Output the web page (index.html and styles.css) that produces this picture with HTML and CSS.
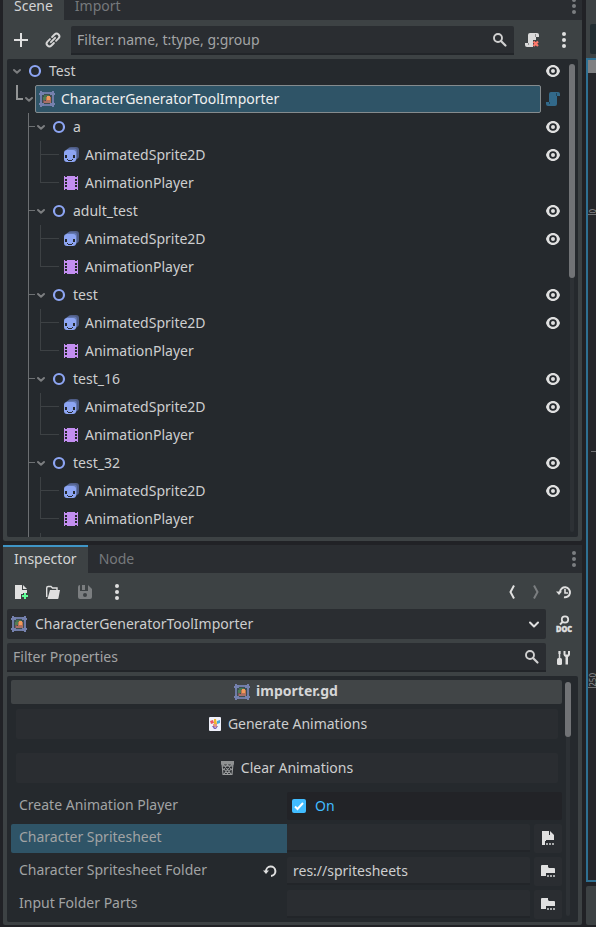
FILE: index.html
```
<!DOCTYPE html>
<html lang="en">
<head>
<meta charset="utf-8">
<title>Scene and Inspector docks</title>
<link rel="stylesheet" href="styles.css">
</head>
<body>
<svg class="defs" aria-hidden="true">
  <symbol id="eye" viewBox="0 0 16 16"><path d="M8 2C4.500 2 1.800 4.600 1 8c.8 3.400 3.500 6 7 6s6.200-2.600 7-6c-.8-3.400-3.500-6-7-6zm0 2.200a3.800 3.800 0 1 1 0 7.600 3.800 3.800 0 0 1 0-7.600zM8 6a2 2 0 1 0 0 4 2 2 0 0 0 0-4z" fill="#e0e0e0" fill-rule="evenodd"/></symbol>
  <symbol id="node2d" viewBox="0 0 16 16"><circle cx="8" cy="8" r="5" fill="none" stroke="#8da5f3" stroke-width="2.200"/></symbol>
  <symbol id="sprite" viewBox="0 0 16 16"><rect x="5" y="0" width="11" height="12" rx="3" fill="#4f5d87"/><rect x="3" y="1.500" width="11" height="12" rx="3" fill="#6478b0"/><rect x="1" y="3" width="12" height="12" rx="3" fill="#8da5f3"/><path d="M2 8h2v3H2zM10 8h2v3h-2zM4 12h1v1h4v-1h1v1H9v1H5v-1H4z" fill="#25292d"/></symbol>
  <symbol id="film" viewBox="0 0 16 16"><path d="M1 1v14h14V1z" fill="#c38ef1"/><path d="M2 1h2v1H2zM2 4h2v2H2zM2 7h2v2H2zM2 10h2v2H2zM2 14h2v1H2zM12 1h2v1h-2zM12 4h2v2h-2zM12 7h2v2h-2zM12 10h2v2h-2zM12 14h2v1h-2z" fill="#25292d"/></symbol>
  <symbol id="chev" viewBox="0 0 10 10"><path d="M2 4l3 2.700L8 4" fill="none" stroke="#7c7e80" stroke-width="2" stroke-linecap="round" stroke-linejoin="round"/></symbol>
  <symbol id="frame" viewBox="0 0 16 16"><path d="M2 2h12v12H2z" fill="#3c4e52" stroke="#6f7ba6" stroke-width="2"/><path d="M1 0h2v1h2v3H3v1H1V4H0V2h1zM13 0h2v2h1v2h-1v1h-2V4h-2V1h2zM1 11h2v1h2v3H3v1H1v-2H0v-2h1zM13 11h2v1h1v2h-1v2h-2v-1h-2v-3h2z" fill="#7581ae"/><path d="M5 4h5v3H5z" fill="#4a7450"/><path d="M4 9h2v3H4z" fill="#7b5558"/><path d="M7 6h5v4H7z" fill="#b97054"/><path d="M8 5h3v4H8z" fill="#f09a5a"/><path d="M5 10h7v2H5z" fill="#a86f68"/><path d="M4 6h3v3H4z" fill="#527d55"/></symbol>
  <symbol id="search" viewBox="0 0 16 16"><circle cx="6" cy="6" r="4" fill="none" stroke="#d0d0d0" stroke-width="1.900"/><path d="M9 9l4.500 4.500" stroke="#d0d0d0" stroke-width="2.200" stroke-linecap="round"/></symbol>
  <symbol id="script" viewBox="0 0 16 16"><path d="M6 1a2 2 0 0 0-2 2v8H1v2a2 2 0 0 0 2 2h7a2 2 0 0 0 2-2V5h3V3a2 2 0 0 0-2-2z" fill="currentColor"/><path d="M11.500 2v3M4.500 11v2" stroke="#0005"/></symbol>
  <symbol id="dots" viewBox="0 0 16 16"><circle cx="8" cy="2" r="2"/><circle cx="8" cy="8" r="2"/><circle cx="8" cy="14" r="2"/></symbol>
  <symbol id="folder" viewBox="0 0 16 16"><path d="M1 3a1 1 0 0 1 1-1h6v2l1 1h5a1 1 0 0 1 1 1v4H6v3H1z" fill="#e0e0e0"/><path d="M7 12h2v2H7zM10 12h2v2h-2zM13 12h2v2h-2z" fill="#a8aaab"/></symbol>
</svg>

<main class="editor">
  <div class="docks">
    <section class="dock scene">
      <div class="tabs">
        <span class="tab active">Scene</span><span class="tab">Import</span>
        <svg class="icon tabmenu dim"><use href="#dots"/></svg>
      </div>
      <div class="toolbar">
        <svg class="icon" viewBox="0 0 16 16"><path d="M8 1v14M1 8h14" stroke="#e0e0e0" stroke-width="2"/></svg>
        <svg class="icon link" viewBox="0 0 16 16"><g transform="rotate(-45 8 8)" fill="none" stroke="#d6d6d6" stroke-width="1.900"><path d="M6.500 5.200H3a2.800 2.800 0 0 0 0 5.600h3.500M9.500 5.200H13a2.800 2.800 0 0 1 0 5.600H9.500M5 8h6" stroke-linecap="round"/></g></svg>
        <div class="field grow"><span>Filter: name, t:type, g:group</span><svg class="icon"><use href="#search"/></svg></div>
        <svg class="icon detach" viewBox="0 0 16 16"><use href="#script"/><path d="M9 8h7v8H9z" fill="#3d4244"/><path d="M9.500 9.500l4.500 4.500M14 9.500L9.500 14" stroke="#ff786b" stroke-width="2.200"/></svg>
        <svg class="icon bright"><use href="#dots"/></svg>
      </div>
      <div class="tree">
        <div class="rows">
          <div class="row root"><svg class="chev"><use href="#chev"/></svg><svg class="icon"><use href="#node2d"/></svg><span>Test</span><svg class="icon eye"><use href="#eye"/></svg></div>
          <div class="row chosen"><svg class="elbow" viewBox="0 0 28 28"><path d="M10 0v14h6" fill="none" stroke="#929495" stroke-width="2"/><use href="#chev" x="17" y="9" width="10" height="10"/></svg><div class="selection"><svg class="icon"><use href="#frame"/></svg><span>CharacterGeneratorToolImporter</span></div><svg class="icon eye blue"><use href="#script"/></svg></div>
          <div class="branch">
            <div class="row group"><svg class="chev"><use href="#chev"/></svg><svg class="icon"><use href="#node2d"/></svg><span>a</span><svg class="icon eye"><use href="#eye"/></svg></div>
            <div class="row leaf"><svg class="icon"><use href="#sprite"/></svg><span>AnimatedSprite2D</span><svg class="icon eye"><use href="#eye"/></svg></div>
            <div class="row leaf last"><svg class="icon"><use href="#film"/></svg><span>AnimationPlayer</span></div>
            <div class="row group"><svg class="chev"><use href="#chev"/></svg><svg class="icon"><use href="#node2d"/></svg><span>adult_test</span><svg class="icon eye"><use href="#eye"/></svg></div>
            <div class="row leaf"><svg class="icon"><use href="#sprite"/></svg><span>AnimatedSprite2D</span><svg class="icon eye"><use href="#eye"/></svg></div>
            <div class="row leaf last"><svg class="icon"><use href="#film"/></svg><span>AnimationPlayer</span></div>
            <div class="row group"><svg class="chev"><use href="#chev"/></svg><svg class="icon"><use href="#node2d"/></svg><span>test</span><svg class="icon eye"><use href="#eye"/></svg></div>
            <div class="row leaf"><svg class="icon"><use href="#sprite"/></svg><span>AnimatedSprite2D</span><svg class="icon eye"><use href="#eye"/></svg></div>
            <div class="row leaf last"><svg class="icon"><use href="#film"/></svg><span>AnimationPlayer</span></div>
            <div class="row group"><svg class="chev"><use href="#chev"/></svg><svg class="icon"><use href="#node2d"/></svg><span>test_16</span><svg class="icon eye"><use href="#eye"/></svg></div>
            <div class="row leaf"><svg class="icon"><use href="#sprite"/></svg><span>AnimatedSprite2D</span><svg class="icon eye"><use href="#eye"/></svg></div>
            <div class="row leaf last"><svg class="icon"><use href="#film"/></svg><span>AnimationPlayer</span></div>
            <div class="row group"><svg class="chev"><use href="#chev"/></svg><svg class="icon"><use href="#node2d"/></svg><span>test_32</span><svg class="icon eye"><use href="#eye"/></svg></div>
            <div class="row leaf"><svg class="icon"><use href="#sprite"/></svg><span>AnimatedSprite2D</span><svg class="icon eye"><use href="#eye"/></svg></div>
            <div class="row leaf last"><svg class="icon"><use href="#film"/></svg><span>AnimationPlayer</span></div>
            <div class="stub"></div>
          </div>
        </div>
        <div class="scroll"><div class="thumb"></div></div>
      </div>
    </section>

    <section class="dock inspector">
      <div class="tabs">
        <span class="tab active">Inspector</span><span class="tab">Node</span>
        <svg class="icon tabmenu dim"><use href="#dots"/></svg>
      </div>
      <div class="toolbar">
        <svg class="icon" viewBox="0 0 16 16"><path d="M2 1h7v5h5v3h-4v1H8v5H2z" fill="#e0e0e0"/><path d="M10 1l4 4h-4z" fill="#e0e0e0"/><path d="M12 9v6M9 12h6" stroke="#5fff97" stroke-width="2"/></svg>
        <svg class="icon open" viewBox="0 0 16 16"><path d="M1.700 13V4a1.500 1.500 0 0 1 1.500-1.500H6L7.500 4H12v2" fill="none" stroke="#e0e0e0" stroke-width="1.400"/><path d="M5 6h10l-1.500 8a1 1 0 0 1-1 1H2.500z" fill="#e0e0e0"/></svg>
        <svg class="icon save" viewBox="0 0 16 16"><path d="M1 3a2 2 0 0 1 2-2v6h8V1l4 4v8a2 2 0 0 1-2 2H3a2 2 0 0 1-2-2z" fill="#7b7e80"/><path d="M5 1h3v5H5z" fill="#7b7e80"/><circle cx="8" cy="11" r="2" fill="#3d4244"/></svg>
        <svg class="icon bright"><use href="#dots"/></svg>
        <span class="grow"></span>
        <svg class="icon" viewBox="0 0 16 16"><path d="M10 1.500L6.500 8l3.500 6.500" fill="none" stroke="#e0e0e0" stroke-width="2"/></svg>
        <svg class="icon next" viewBox="0 0 16 16"><path d="M6 1.500L9.500 8 6 14.500" fill="none" stroke="#7b7e80" stroke-width="2"/></svg>
        <svg class="icon history" viewBox="0 0 16 16"><path d="M4 8a5 5 0 1 1 4 5.200" fill="none" stroke="#e0e0e0" stroke-width="2"/><path d="M0 7.500h6L3 11z" fill="#e0e0e0"/><path d="M9 5v4h3" fill="none" stroke="#e0e0e0" stroke-width="1.600"/></svg>
      </div>
      <div class="line">
        <div class="picker grow"><svg class="icon"><use href="#frame"/></svg><span>CharacterGeneratorToolImporter</span><svg class="icon down" viewBox="0 0 16 16"><path d="M4 6.500l4 4 4-4" fill="none" stroke="#e0e0e0" stroke-width="2" stroke-linecap="round" stroke-linejoin="round"/></svg></div>
        <svg class="icon" viewBox="0 0 16 16"><circle cx="9" cy="3.500" r="3.200" fill="none" stroke="#e0e0e0" stroke-width="1.800"/><path d="M7 5.500L4 8.500" stroke="#e0e0e0" stroke-width="2"/><text class="doc" x="0" y="15.700" textLength="16" lengthAdjust="spacingAndGlyphs">DOC</text></svg>
      </div>
      <div class="line filter">
        <div class="field grow"><span>Filter Properties</span><svg class="icon"><use href="#search"/></svg></div>
        <svg class="icon tools" viewBox="0 0 16 16"><path d="M4.500 1v8" stroke="#e0e0e0" stroke-width="1.500"/><path d="M3.500 1h2v3h-2z" fill="#e0e0e0"/><rect x="2" y="8" width="5" height="7" rx="1.500" fill="#e0e0e0"/><path d="M8.500 1v3.500a3 3 0 0 0 2 2.500v7.500h2.500V7a3 3 0 0 0 2-2.500V1h-2v3.500h-2.500V1z" fill="#e0e0e0"/></svg>
      </div>
      <div class="panel">
        <div class="props">
          <div class="category"><svg class="icon"><use href="#frame"/></svg><b>importer.gd</b></div>
          <div class="action"><svg class="icon" viewBox="0 0 16 16"><rect x="2" y="1" width="12" height="14" rx="1" fill="#eff0fa"/><path d="M3 5l3-1 1 3-3 1z" fill="#e95463"/><path d="M7 3h2l1 5H7z" fill="#efb62e"/><path d="M10 5l3-1v3l-3 1z" fill="#45a9dc"/><path d="M6 8h4v3H6z" fill="#e59783"/><path d="M5 10h2l1 2 2-2h1l-2 3H7z" fill="#8064b9"/></svg><span>Generate Animations</span></div>
          <div class="action clear"><svg class="icon" viewBox="0 0 16 16"><path d="M2 1h13v3.500H2z" fill="#8f9192"/><path d="M3 4l1 10.500h9L14 4M4 4l8 10M8 4l5 6M13 4L5 14M9 4l-5 6M12 9l-4 5M5 9l4 5M3.500 6h10" fill="none" stroke="#9b9d9e" stroke-width="1.100"/></svg><span>Clear Animations</span></div>
          <div class="prop first-prop"><label>Create Animation Player</label><div class="value check"><svg class="icon" viewBox="0 0 16 16"><rect x="1" y="1" width="14" height="14" rx="2" fill="#41bcff"/><path d="M4 8.500l2.500 2.500L12 5" fill="none" stroke="#fff" stroke-width="2"/></svg>On</div></div>
          <div class="prop active"><label>Character Spritesheet</label><div class="value"></div><div class="browse"><svg class="icon" viewBox="0 0 16 16"><path d="M2 1h7v4h5v5H6v1H5v4H2z" fill="#e0e0e0"/><path d="M10 1l4 4h-4z" fill="#e0e0e0"/><path d="M6 13h2v2H6zM9 13h2v2H9zM12 13h2v2h-2z" fill="#a8aaab"/></svg></div></div>
          <div class="prop"><label>Character Spritesheet Folder</label><svg class="icon revert" viewBox="0 0 16 16"><path d="M4 8.500A4.700 4.700 0 1 1 9 13" fill="none" stroke="#e0e0e0" stroke-width="2"/><path d="M1 7.500h6L4 11z" fill="#e0e0e0"/></svg><div class="value">res://spritesheets</div><div class="browse"><svg class="icon"><use href="#folder"/></svg></div></div>
          <div class="prop"><label>Input Folder Parts</label><div class="value"></div><div class="browse"><svg class="icon"><use href="#folder"/></svg></div></div>
        </div>
        <div class="scroll"><div class="thumb"></div></div>
      </div>
    </section>
  </div>

  <aside class="canvas">
    <div class="canvasbar"><div class="tool"></div></div>
    <div class="viewport">
      <div class="corner"></div>
      <div class="mark first"></div><span class="num num-first">0</span>
      <div class="mark mid"></div>
      <div class="mark end"></div><span class="num num-end">250</span>
    </div>
    <div class="bottom"></div>
  </aside>
</main>
</body>
</html>
```
FILE: styles.css
```
* { box-sizing: border-box; }
body { margin: 0; background: #212226; color: #cdcecf; font: 14px/20px "Noto Sans", sans-serif; }
.defs { position: absolute; width: 0; height: 0; }
.editor { display: flex; width: 596px; height: 927px; overflow: hidden; padding-left: 3px; }
.docks { width: 579px; display: flex; flex-direction: column; gap: 4px; }
.dock { background: #3d4244; display: flex; flex-direction: column; }
.scene { height: 541px; border-radius: 0 0 2px 2px; }
.inspector { height: 380px; border-radius: 0 0 2px 2px; }
.icon { width: 16px; height: 16px; flex: none; display: block; overflow: visible; }
.grow { flex: 1; }
.bright { fill: #e0e0e0; }
.dim { fill: #7b7e81; }

.tabs { display: flex; background: #2a2d31; height: 28px; flex: none; align-items: stretch; }
.scene .tabs { height: 20px; }
.tab { padding: 4px 11px; color: #76797c; }
.scene .tab { padding-top: 0; line-height: 12px; }
.tab.active { background: #3d4244; color: #d3d4d5; }
.inspector .tab { border-top: 2px solid transparent; padding-top: 2px; }
.inspector .tab.active { border-top-color: #3f95c6; }
.tabmenu { margin: auto 0 auto auto; }
.scene .tabmenu { margin-top: -2px; }

.toolbar { display: flex; align-items: center; flex: none; }
.scene .toolbar { height: 39px; padding: 1px 10px 0; }
.link { margin: 0 10px 0 16px; }
.detach { margin: 0 16px 0 10px; color: #dadada; }
.field { height: 29px; display: flex; align-items: center; justify-content: space-between; padding: 1px 6px 0; background: #2a2d31; border-bottom: 2px solid #222529; border-radius: 2px 2px 0 0; color: #a2a4a5; }

.tree { width: 571px; height: 478px; margin-left: 4px; background: #25292d; border-radius: 2px; overflow: hidden; display: flex; }
.rows { width: 562px; margin-top: -2px; }
.row { height: 28px; display: flex; align-items: center; padding-right: 8px; }
.row .eye { margin-left: auto; }
.chev { width: 10px; height: 10px; flex: none; }
.root { padding-left: 5px; }
.root .icon { margin: 0 6px 0 5px; }
.root .icon.eye { margin: 0 0 0 auto; }
.elbow { width: 28px; height: 28px; flex: none; }
.selection { width: 506px; height: 28px; display: flex; align-items: center; gap: 6px; padding-left: 3px; background: #2f5467; border: 1px solid #858b8e; border-radius: 2px; color: #f0f0f0; }
.blue { color: #32698a; }
.branch { margin-left: 21px; border-left: 1px solid #6c6f72; }
.group { background: linear-gradient(#6c6f72, #6c6f72) 0 13px / 6px 1px no-repeat; padding-left: 7px; }
.group .icon { margin: 0 6px 0 5px; }
.group .icon.eye, .leaf .icon.eye { margin: 0 0 0 auto; }
.leaf { padding-left: 34px; background: linear-gradient(#3d4144, #3d4144) 11px 13px / 19px 1px no-repeat, linear-gradient(#3d4144, #3d4144) 11px 0 / 1px 28px no-repeat; }
.leaf.last { background-size: 19px 1px, 1px 13px; }
.leaf .icon { margin-right: 6px; }
.stub { height: 6px; margin-left: 11px; border-left: 1px solid #3d4144; }
.scroll { width: 6px; background: #2d3135; border-radius: 3px; }
.tree .scroll { width: 4px; height: 468px; margin: 5px 0 0 1px; overflow: visible; }
.thumb { background: #717376; border-radius: 3px; }
.tree .thumb { width: 6px; height: 214px; margin-left: -1px; }

.inspector .toolbar { height: 36px; padding: 2px 10px 0; }
.inspector .toolbar > .icon { margin-right: 16px; }
.inspector .toolbar > .icon.next { margin-left: -8px; margin-right: 12px; }
.inspector .toolbar > .icon.history { margin-right: 0; }
.line { display: flex; align-items: center; gap: 10px; padding: 0 10px 0 4px; flex: none; }
.picker { height: 30px; display: flex; align-items: center; gap: 8px; padding: 0 4px; background: #2a2d31; border-radius: 2px; }
.down { margin-left: auto; }
.filter { margin: 4px 0; }
.filter .tools { margin: 0 1px 0 -1px; }
.doc { font: 900 8px "Noto Sans", sans-serif; fill: #e0e0e0; stroke: #e0e0e0; stroke-width: .4px; }
.panel { width: 571px; height: 246px; margin-left: 4px; background: #25292d; border-radius: 2px; padding: 4px; display: flex; overflow: hidden; }
.props { width: 551px; }
.category { height: 24px; display: flex; align-items: center; justify-content: center; gap: 6px; background: #414547; border-radius: 2px; color: #d5d6d7; }
.category b { position: relative; top: -1px; }
.category .icon { margin-left: -1px; }
.action { height: 30px; margin: 5px 4px 14px 5px; display: flex; align-items: center; justify-content: center; gap: 5px; background: #2a2d31; border-radius: 2px; }
.action.clear { margin-bottom: 9px; gap: 4px; }
.clear .icon { margin-left: -2px; margin-right: 2px; }
.prop { height: 29px; margin-bottom: 4px; display: flex; position: relative; }
.first-prop { height: 28px; }
.prop label { width: 276px; padding: 3px 8px; color: #a1a3a4; border-radius: 2px 0 0 2px; }
.prop.active label { background: #2f5467; }
.value { width: 243px; height: 28px; padding: 3px 6px; background: #2a2d31; border-bottom: 2px solid #222529; border-radius: 2px 2px 0 0; line-height: 22px; }
.value.check { width: 275px; background: #222327; border: 0; border-radius: 2px; display: flex; align-items: center; gap: 8px; padding: 0 4px; color: #41bcff; }
.browse { width: 28px; height: 29px; margin-left: 4px; padding-bottom: 1px; background: #2a2d31; border-radius: 2px; display: grid; place-items: center; }
.revert { position: absolute; left: 251px; top: 6px; }
.panel .scroll { width: 4px; height: 234px; margin: 2px 0 0 4px; }
.panel .thumb { width: 6px; height: 55px; margin-left: -1px; }

.canvas { width: 10px; margin-left: 4px; display: flex; flex-direction: column; }
.canvasbar { height: 58px; background: #3d4244; padding: 24px 0 0 4px; flex: none; }
.tool { height: 30px; background: #222d32; border-radius: 2px 0 0 2px; }
.viewport { height: 824px; flex: none; border: 2px solid #2f7092; border-right: 0; background: #25262a; position: relative; overflow: hidden; }
.corner { height: 13px; background: #808183; }
.mark { position: absolute; left: 0; width: 10px; height: 1px; background: #707174; }
.first { top: 154px; }
.mid { top: 391px; left: 3px; }
.end { top: 627px; }
.num { position: absolute; left: 0; color: #929395; font-size: 8px; line-height: 10px; writing-mode: vertical-rl; transform: rotate(180deg); }
.num-first { bottom: 666px; }
.num-end { bottom: 193px; }
.bottom { height: 39px; margin-top: 4px; background: #3d4244; border-radius: 2px 0 0 2px; }
```
